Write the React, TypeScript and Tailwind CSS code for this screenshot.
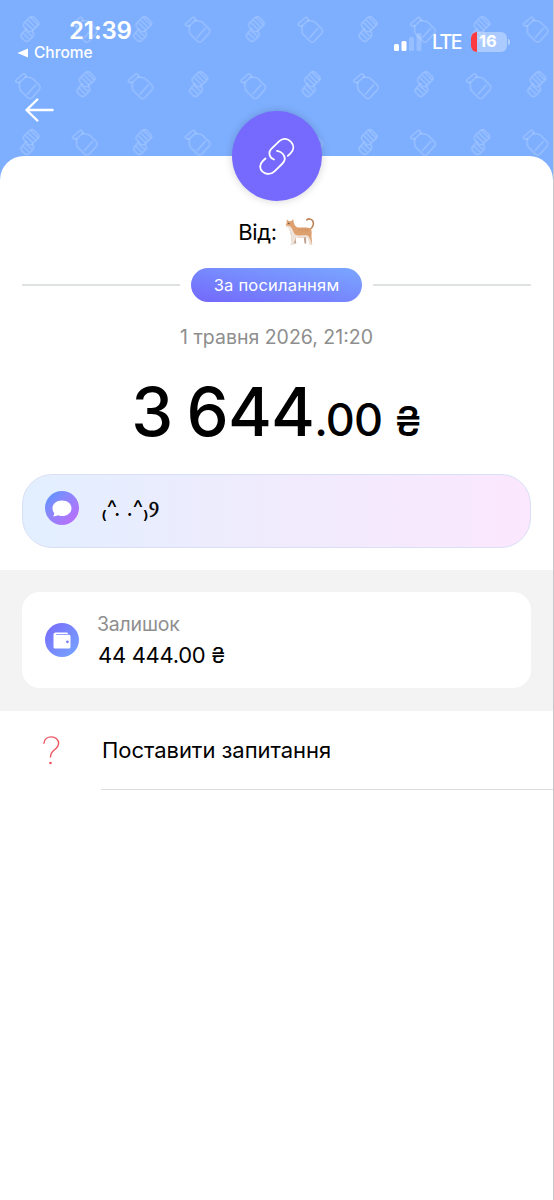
import { ReactNode } from 'react'

const HeaderPattern = () => (
  <svg className="absolute inset-0 w-full h-full" fill="none" stroke="white" strokeOpacity="0.2" strokeWidth="1.5" strokeLinejoin="round" strokeLinecap="round">
    <defs>
      <g id="jar">
        <path d="M-12 -6.5 L-5 -12.5 Q-3.5 -13 -2.8 -11.8 L-2 -10 L-8.5 -4 L-11 -4 Q-13 -5 -12 -6.5 Z" />
        <path d="M-8.5 -4 L-8.5 1 Q-8.5 3 -7 4.5 L0 11.5 Q2 13 4 11.3 L11.5 3 Q13 1 11.5 -1 L5 -7.5 Q3.5 -9 1.5 -9 L-2.5 -9.5" />
        <path d="M-0.5 7.5 L7.5 -1.5" />
      </g>
      <g id="stack">
        <path d="M-1 -12 Q1.5 -14.5 4 -12.5 L8 -8.5 Q10 -6 7.5 -4 L2 1 Q0 2.5 -2 1 L-6 -3 Q-7.5 -5 -6 -7 Z" />
        <path d="M1 -12 L7.5 -5.5 M-1.5 -9.5 L5 -3 M-4 -7 L2.5 -0.5" />
        <path d="M-4 -1 L-8 3.5 Q-10 6 -8 8 L-5.5 10.5 Q-3.5 12.5 -1 10.5 L3 6.5 Q4.5 4 2.5 1.5" />
        <path d="M-6.5 3.5 L-1.5 8.5 M-3.5 1.5 L1.5 6" />
      </g>
      <pattern id="tile" width="112.7" height="113" patternUnits="userSpaceOnUse">
        <use href="#stack" x="30" y="30" />
        <use href="#jar" x="85" y="30" />
        <use href="#jar" x="28" y="86.5" />
        <use href="#stack" x="86" y="85" />
      </pattern>
    </defs>
    <rect width="100%" height="100%" fill="url(#tile)" stroke="none" />
  </svg>
)

const StatusBar = () => (
  <div className="relative flex justify-between text-white">
    <div className="pl-[17px] pt-[17px]">
      <div className="pl-[52px] text-[24px] leading-[28px] font-semibold tracking-[-0.1px]">21:39</div>
      <div className="flex items-center gap-[6px] text-[15.5px] leading-[16px] font-medium">
        <svg width="11" height="10" viewBox="0 0 11 10" fill="white">
          <path d="M0.5 5 L11 0.5 V9.5 Z" />
        </svg>
        Chrome
      </div>
    </div>
    <div className="flex items-center h-[22px] mt-[31px] mr-[43px]">
      <svg width="29" height="18" viewBox="0 0 29 18" fill="white">
        <rect x="1" y="11" width="5" height="7" rx="1.5" />
        <rect x="8.5" y="8" width="5" height="10" rx="1.5" />
        <rect x="16" y="4" width="5" height="14" rx="1.5" opacity="0.2" />
        <rect x="23.5" y="0" width="5" height="18" rx="1.5" opacity="0.2" />
      </svg>
      <span className="ml-[10px] w-[29px] pt-px text-[19.5px] font-medium tracking-[-1.6px]">LTE</span>
      <div className="ml-[10px] flex w-[36px] h-[20px] rounded-[6px] overflow-hidden bg-white/35">
        <div className="w-[6px] bg-[#fb3b40]"></div>
        <span className="pl-[2px] text-[16.5px] leading-[19px] font-bold">16</span>
      </div>
      <div className="ml-px w-[2px] h-[6px] rounded-r-full bg-white/40"></div>
    </div>
  </div>
)

const CatIcon = () => (
  <svg width="30" height="30" viewBox="0 0 30 30" role="img" aria-label="🐈">
    <path d="M24.8 12.5 C27.5 11 29.5 7 27.8 4 C26.3 1.4 23 1.4 21.8 3" fill="none" stroke="#bd8357" strokeWidth="1.6" strokeLinecap="round" />
    <path d="M10 18 L11.3 26.5 H9 L7 17 Z M21 18 L21.3 26.5 H19.5 L18.5 18 Z" fill="#bfa493" />
    <path d="M1.8 2.6 L4.2 4.3 L6.5 4 L8.2 2 L8.8 5.8 C9.6 8.5 11 10.2 13 10.5 C17 11 22 9.5 25.2 11.5 C27.6 13.5 26.4 17 26.5 20 L27.2 27.5 H24.8 L23 20.5 C19 19.5 15 21.5 11 20 L8.2 28 H5.8 L6.5 19 C4.7 16 4.6 13 4.8 10.5 C2 10.3 0.4 9 0.8 7.7 C1.8 6.7 1.8 5 1.8 2.6 Z" fill="#dea06f" />
    <path d="M0.8 7.7 C2 9 4 8.2 5.5 9.5 C7.5 11 8 15 10 17.5 C14 19.5 20 17.5 22.5 18.5 C24.5 19.5 26 24 27.2 27.5 H24.8 L23 20.5 C19 19.5 15 21.5 11 20 L8.2 28 H5.8 L6.5 19 C4.7 16 4.6 13 4.8 10.5 C2 10.3 0.5 9 0.8 7.7 Z" fill="#eee4dd" />
    <path d="M14 11.5 L14.6 14 M17 11.5 L17.5 14.5 M20 11.5 L20.4 14.5 M23 12 L23 14.5" stroke="#c88856" strokeWidth="0.7" />
    <circle cx="3.8" cy="6.4" r="0.6" fill="#38463b" />
  </svg>
)

const LinkIcon = () => (
  <svg width="36" height="37" viewBox="0 0 36 37" fill="none" stroke="white" strokeWidth="1.8" strokeLinecap="round">
    <path d="M15 21.5 C10.5 20 8.8 14.5 12.3 10.8 L20.3 3.2 C24 -0.2 28.8 0.3 32 3.8 C35.3 7.4 35 12 31.5 15.3 L28.8 17.8" />
    <path d="M6.5 20.5 L3.8 23 C0.4 26.4 0.3 30.5 3.5 33.6 C7 36.8 12 36.8 15.5 33.4 L23 26 C26.5 22.5 26.4 18.6 23.5 15.5 C22 13.9 20.3 13 18 12.8" />
  </svg>
)

const Hr = () => <div className="flex-1 h-[2px] bg-[#dfe2e3]"></div>

const RoundIcon = ({ children, className }: { children: ReactNode; className: string }) => (
  <div className={`shrink-0 w-[34px] h-[34px] rounded-full flex items-center justify-center ${className}`}>
    {children}
  </div>
)

function App() {
  return (
    <div className="h-[1200px] w-[554px] overflow-hidden bg-white border-r border-[#c8c8ca] text-black font-['Inter','Noto_Sans','DejaVu_Sans',sans-serif]">
      <header className="relative h-[184px] bg-[#7eafff]">
        <HeaderPattern />
        <StatusBar />
        <button className="relative block mt-[37px] ml-[25px]" aria-label="Назад">
          <svg width="29" height="24" viewBox="0 0 29 24" fill="none" stroke="white" strokeWidth="2.4" strokeLinecap="round" strokeLinejoin="round">
            <path d="M27.5 12 H1.5 M12.3 1.5 L1.5 12 L12.3 22.5" />
          </svg>
        </button>
      </header>

      <main className="relative -mt-[28px] rounded-t-[24px] bg-white">
        <section className="flex flex-col items-center px-[22px] h-[414px]">
          <div className="shrink-0 -mt-[45px] w-[90px] h-[90px] rounded-full bg-[#7669fd] flex items-center justify-center shadow-[0_0_8px_rgba(0,0,0,0.18)]">
            <LinkIcon />
          </div>
          <div className="mt-[16px] flex items-center gap-[8px] h-[30px] text-[22px]">
            <span className="tracking-[-0.3px]">Від:</span>
            <CatIcon />
          </div>

          <div className="mt-[21px] w-full flex items-center gap-[11px]">
            <Hr />
            <div className="w-[171px] h-[34px] rounded-full bg-linear-to-tr from-[#7367fb] to-[#7aa7ff] text-white text-[16.5px] leading-[35px] text-center tracking-[0.2px]">
              За посиланням
            </div>
            <Hr />
          </div>

          <div className="mt-[22px] text-[19.5px] leading-[26px] text-[#8e8e8e] whitespace-nowrap">1 травня 2026, 21:20</div>

          <div className="mt-[22px] h-[80px] flex items-baseline leading-[80px] font-medium whitespace-nowrap">
            <span className="text-[67px] tracking-[-0.8px] [word-spacing:-3px]">3 644</span>
            <span className="text-[45px] tracking-[-0.8px]">.00</span>
            <span className="ml-[12px] text-[41px]">₴</span>
          </div>

          <div className="mt-[22px] w-full h-[74px] shrink-0 rounded-[30px] border border-[#d9e0f5] bg-linear-to-r from-[#e2efff] via-[#f0ebfd] to-[#fbe7fe] flex items-start pl-[22px] pt-[16px]">
            <RoundIcon className="bg-linear-to-br from-[#4d97ff] to-[#c166fa]">
              <svg width="20" height="17" viewBox="0 0 20 17" fill="white">
                <path d="M10 0.5 C15.5 0.5 19.5 3.8 19.5 8.2 C19.5 12.8 15.5 16 10 16 C8.5 16 7 15.8 5.8 15.2 C4.5 16 2.5 16.5 1 16.3 C2 15.2 2.2 14.3 2.2 13 C1 11.8 0.5 10 0.5 8.2 C0.5 3.8 4.5 0.5 10 0.5 Z" />
              </svg>
            </RoundIcon>
            <span className="ml-[22px] text-[22px] leading-[34px] tracking-[-0.1px]">₍^. .^₎<span className="text-[20px] [-webkit-text-stroke:0.4px_black]">Ⳋ</span></span>
          </div>
        </section>

        <section className="h-[141px] bg-[#f3f3f3] px-[22px] pt-[22px]">
          <div className="h-[96px] rounded-[18px] bg-white flex items-center pl-[23px]">
            <RoundIcon className="bg-linear-to-br from-[#7868fa] to-[#75a6ff]">
              <svg width="18" height="17" viewBox="0 0 18 17">
                <path d="M2.5 0.5 H14 Q15 0.5 15 2 H3 V2.8 H16 Q17.5 2.8 17.5 4.3 V15 Q17.5 16.5 16 16.5 H2 Q0.5 16.5 0.5 15 V2.5 Q0.5 0.5 2.5 0.5 Z" fill="white" />
                <circle cx="14.4" cy="9.8" r="1.4" fill="#7882fb" />
              </svg>
            </RoundIcon>
            <div className="ml-[18px] -mt-px">
              <div className="text-[19.5px] leading-[28px] tracking-[-0.2px] text-[#8e8e8e]">Залишок</div>
              <div className="mt-[3px] pl-px text-[22px] leading-[28px] tracking-[-0.3px]">44 444.00 ₴</div>
            </div>
          </div>
        </section>

        <section className="flex h-[79px]">
          <div className="w-[101px] pt-[25px] pl-[43px]">
            <svg width="17" height="29" viewBox="0 0 17 29" fill="none" stroke="#ec5660" strokeWidth="1.4" strokeLinecap="round">
              <path d="M1 7.2 C1.2 3.3 4.3 0.9 8.3 0.9 C12.5 0.9 15.6 3.6 15.6 7.2 C15.6 10.5 13.5 12.2 11.2 14 C8.5 16.2 7.5 17.5 7.5 21" />
              <circle cx="7.5" cy="27" r="1.3" fill="#ec5660" stroke="none" />
            </svg>
          </div>
          <div className="flex-1 border-b border-[#dedede] pl-px text-[22px] leading-[78px] tracking-[-0.04px]">Поставити запитання</div>
        </section>
      </main>
    </div>
  )
}

export default App
